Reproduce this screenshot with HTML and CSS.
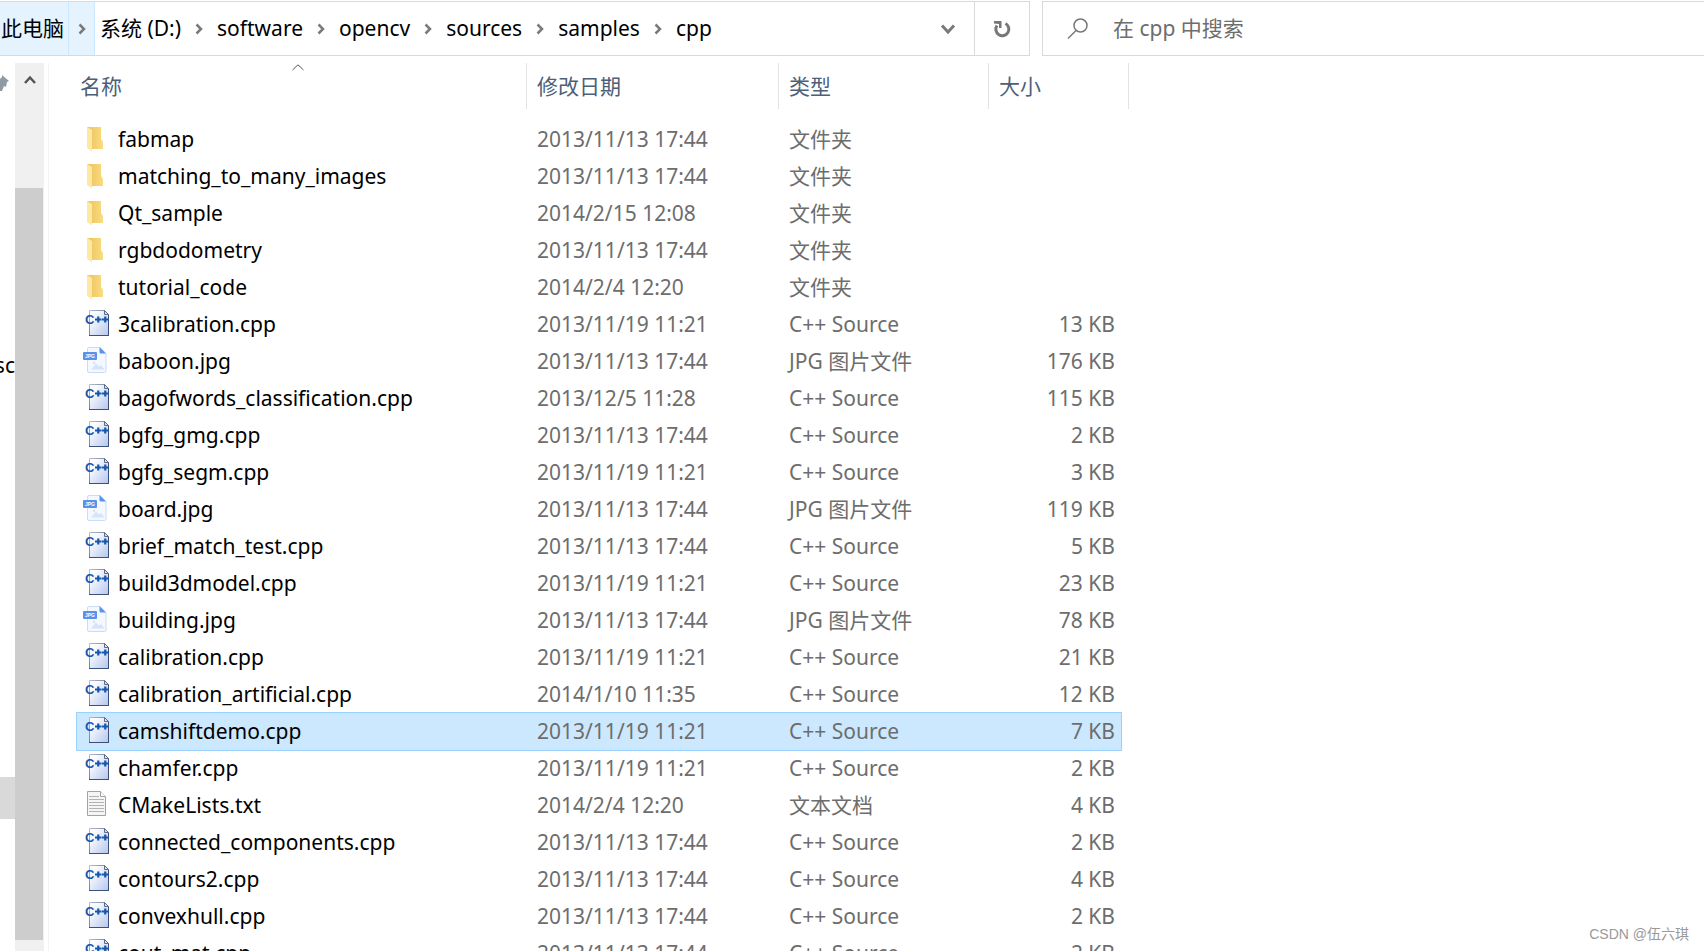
FILE: index.html
```html
<!DOCTYPE html>
<html lang="zh-CN">
<head>
<meta charset="utf-8">
<title>cpp</title>
<link rel="stylesheet" href="styles.css">
</head>
<body>
<svg class="defs" aria-hidden="true">
  <defs>
    <linearGradient id="page-blue" x1="0" y1="0" x2="1" y2="1">
      <stop offset="0.2" stop-color="#fdfdff"/><stop offset="1" stop-color="#b4c6ee"/>
    </linearGradient>
    <linearGradient id="page-edge" x1="0" y1="0" x2="1" y2="1">
      <stop offset="0" stop-color="#b3bdcd"/><stop offset="1" stop-color="#33456b"/>
    </linearGradient>
    <linearGradient id="folder-back" x1="0" y1="0" x2="1" y2="0">
      <stop offset="0.2" stop-color="#eec763"/><stop offset="1" stop-color="#fbdc80"/>
    </linearGradient>
    <symbol id="folder" viewBox="0 0 28 31">
      <path d="M4 3h14v12l2 3v7H5z" fill="url(#folder-back)"/>
      <path d="M4 3l5 3v21.500l-5-3.500z" fill="#ffe8a2"/>
    </symbol>
    <symbol id="cpp" viewBox="0 0 28 31">
      <path d="M6.500 1.500h15l4 4v21h-19z" fill="url(#page-blue)" stroke="url(#page-edge)"/>
      <path d="M21.500 1.500v4h4z" fill="#dce2ec" stroke="#5d6b85"/>
      <path d="M6 26.500h20M25.500 6v21" fill="none" stroke="#3d5078" stroke-width="1"/>
      <text x="2" y="15" class="cpp-mark">C</text>
      <path d="M12 10.500h6.500M15.250 7.500v6M19 10.500h6.500M22.250 7.500v6" stroke="#1457b0" stroke-width="2.200"/>
    </symbol>
    <symbol id="jpg" viewBox="0 0 28 31">
      <path d="M4.500 3q0-1.500 1.500-1.500h11l6 6V25q0 1.500-1.500 1.500H6q-1.500 0-1.500-1.500z" fill="#f4f8ff" stroke="#c9dcf8"/>
      <path d="M16.500 1l6.500 6.500h-5q-1.500 0-1.500-1.500z" fill="#5a92ea"/>
      <path d="M8 23.500l5-6 3 3 2-1.500 3.500 4.500z" fill="#d5e4fb"/><circle cx="11" cy="17" r="1.300" fill="#d5e4fb"/>
      <rect y="6" width="14" height="8" rx="1" fill="#5a92ea"/>
      <text x="7" y="12" class="jpg-mark">JPG</text>
    </symbol>
    <symbol id="txt" viewBox="0 0 28 31">
      <path d="M4.500 1.500h13l5 5v19h-18z" fill="#f5f5f5" stroke="#a2a2a2"/>
      <path d="M17.500 1.500v5h5" fill="#fff" stroke="#a2a2a2"/>
      <path d="M6 6.500h10M6 9.500h15M6 12.500h15M6 15.500h15M6 18.500h15M6 21.500h15" stroke="#b3b3b3"/>
    </symbol>
    <symbol id="chevron" viewBox="0 0 10 12"><path d="M2.500 1.500L7 6l-4.500 4.500" fill="none" stroke="#7a7a7a" stroke-width="2.500"/></symbol>
  </defs>
</svg>

<header class="topbar">
  <nav class="address" aria-label="地址">
    <div class="hot"><a class="crumb" href="#">此电脑</a><span class="sep"><svg><use href="#chevron"/></svg></span></div>
    <a class="crumb" href="#">系统 (D:)</a><span class="sep"><svg><use href="#chevron"/></svg></span>
    <a class="crumb" href="#">software</a><span class="sep"><svg><use href="#chevron"/></svg></span>
    <a class="crumb" href="#">opencv</a><span class="sep"><svg><use href="#chevron"/></svg></span>
    <a class="crumb" href="#">sources</a><span class="sep"><svg><use href="#chevron"/></svg></span>
    <a class="crumb" href="#">samples</a><span class="sep"><svg><use href="#chevron"/></svg></span>
    <a class="crumb" href="#">cpp</a>
    <button class="history" aria-label="历史记录"><svg width="16" height="12" viewBox="0 0 16 12"><path d="M2 2.500L8 9l6-6.500" fill="none" stroke="#7a7a7a" stroke-width="3"/></svg></button>
    <button class="refresh" aria-label="刷新"><svg width="18" height="18" viewBox="0 0 18 18"><path d="M12.500 3.500A6.500 6.500 0 1 1 4 5.500" fill="none" stroke="#777" stroke-width="3"/><path d="M1 1h7.500v7H6V4L1 3.500z" fill="#777"/></svg></button>
  </nav>
  <label class="search">
    <svg width="24" height="24" viewBox="0 0 24 24"><circle cx="14.500" cy="8.500" r="6.500" fill="none" stroke="#777" stroke-width="1.500"/><path d="M10 13.500L2 21.500" stroke="#777" stroke-width="1.500"/></svg>
    <input type="search" placeholder="在 cpp 中搜索" aria-label="在 cpp 中搜索">
  </label>
</header>

<main class="window">
  <aside class="tree">
    <svg class="pin" width="9" height="17" viewBox="0 0 9 17"><path d="M2 0l7 6-2 1-1 5-2-1-2 5H0V4l2-2z" fill="#8f9ba4"/></svg>
    <span class="tree-label">sc</span>
    <span class="tree-current"></span>
  </aside>
  <div class="scrollbar">
    <button class="scroll-up" aria-label="向上滚动"><svg width="14" height="10" viewBox="0 0 14 10"><path d="M2 8l5-5.500L12 8" fill="none" stroke="#555" stroke-width="2.500"/></svg></button>
    <div class="thumb"></div>
  </div>
  <section class="files">
    <table>
      <thead>
        <tr>
          <th><button>名称</button><svg class="sort" width="12" height="7" viewBox="0 0 12 7"><path d="M.5 6L6 .8 11.500 6" fill="none" stroke="#555"/></svg></th>
          <th><button>修改日期</button></th><th><button>类型</button></th><th><button>大小</button></th>
        </tr>
      </thead>
      <tbody>
        <tr><td><svg><use href="#folder"/></svg>fabmap</td><td>2013/11/13 17:44</td><td>文件夹</td><td></td></tr>
        <tr><td><svg><use href="#folder"/></svg>matching_to_many_images</td><td>2013/11/13 17:44</td><td>文件夹</td><td></td></tr>
        <tr><td><svg><use href="#folder"/></svg>Qt_sample</td><td>2014/2/15 12:08</td><td>文件夹</td><td></td></tr>
        <tr><td><svg><use href="#folder"/></svg>rgbdodometry</td><td>2013/11/13 17:44</td><td>文件夹</td><td></td></tr>
        <tr><td><svg><use href="#folder"/></svg>tutorial_code</td><td>2014/2/4 12:20</td><td>文件夹</td><td></td></tr>
        <tr><td><svg><use href="#cpp"/></svg>3calibration.cpp</td><td>2013/11/19 11:21</td><td>C++ Source</td><td>13 KB</td></tr>
        <tr><td><svg><use href="#jpg"/></svg>baboon.jpg</td><td>2013/11/13 17:44</td><td>JPG 图片文件</td><td>176 KB</td></tr>
        <tr><td><svg><use href="#cpp"/></svg>bagofwords_classification.cpp</td><td>2013/12/5 11:28</td><td>C++ Source</td><td>115 KB</td></tr>
        <tr><td><svg><use href="#cpp"/></svg>bgfg_gmg.cpp</td><td>2013/11/13 17:44</td><td>C++ Source</td><td>2 KB</td></tr>
        <tr><td><svg><use href="#cpp"/></svg>bgfg_segm.cpp</td><td>2013/11/19 11:21</td><td>C++ Source</td><td>3 KB</td></tr>
        <tr><td><svg><use href="#jpg"/></svg>board.jpg</td><td>2013/11/13 17:44</td><td>JPG 图片文件</td><td>119 KB</td></tr>
        <tr><td><svg><use href="#cpp"/></svg>brief_match_test.cpp</td><td>2013/11/13 17:44</td><td>C++ Source</td><td>5 KB</td></tr>
        <tr><td><svg><use href="#cpp"/></svg>build3dmodel.cpp</td><td>2013/11/19 11:21</td><td>C++ Source</td><td>23 KB</td></tr>
        <tr><td><svg><use href="#jpg"/></svg>building.jpg</td><td>2013/11/13 17:44</td><td>JPG 图片文件</td><td>78 KB</td></tr>
        <tr><td><svg><use href="#cpp"/></svg>calibration.cpp</td><td>2013/11/19 11:21</td><td>C++ Source</td><td>21 KB</td></tr>
        <tr><td><svg><use href="#cpp"/></svg>calibration_artificial.cpp</td><td>2014/1/10 11:35</td><td>C++ Source</td><td>12 KB</td></tr>
        <tr class="selected"><td><svg><use href="#cpp"/></svg>camshiftdemo.cpp</td><td>2013/11/19 11:21</td><td>C++ Source</td><td>7 KB</td></tr>
        <tr><td><svg><use href="#cpp"/></svg>chamfer.cpp</td><td>2013/11/19 11:21</td><td>C++ Source</td><td>2 KB</td></tr>
        <tr><td><svg><use href="#txt"/></svg>CMakeLists.txt</td><td>2014/2/4 12:20</td><td>文本文档</td><td>4 KB</td></tr>
        <tr><td><svg><use href="#cpp"/></svg>connected_components.cpp</td><td>2013/11/13 17:44</td><td>C++ Source</td><td>2 KB</td></tr>
        <tr><td><svg><use href="#cpp"/></svg>contours2.cpp</td><td>2013/11/13 17:44</td><td>C++ Source</td><td>4 KB</td></tr>
        <tr><td><svg><use href="#cpp"/></svg>convexhull.cpp</td><td>2013/11/13 17:44</td><td>C++ Source</td><td>2 KB</td></tr>
        <tr><td><svg><use href="#cpp"/></svg>cout_mat.cpp</td><td>2013/11/13 17:44</td><td>C++ Source</td><td>2 KB</td></tr>
      </tbody>
    </table>
  </section>
</main>
<div class="watermark">CSDN @伍六琪</div>
</body>
</html>
```

FILE: styles.css
```css
* { box-sizing: border-box; }

body {
  margin: 0;
  height: 100vh;
  overflow: hidden;
  display: flex;
  flex-direction: column;
  background: #fff;
  color: #000;
  font: 21px/36px "Noto Sans", "Noto Sans CJK SC", sans-serif;
}

button, input {
  font: inherit;
  color: inherit;
  border: 0;
  padding: 0;
  margin: 0;
  background: none;
}

svg { display: block; flex: none; }
.defs { position: absolute; width: 0; height: 0; }

/* address bar and search box */
.topbar {
  display: flex;
  gap: 12px;
  height: 55px;
  margin-top: 1px;
  flex: none;
}

.address {
  display: flex;
  align-items: stretch;
  flex: 0 1 1030px;
  border: 1px solid #d9d9d9;
  border-left: 0;
}

.hot { display: flex; background: #e5f3ff; border-right: 1px solid #cce8ff; }
.hot .sep { border-left: 1px solid #cce8ff; }

.crumb {
  padding: 0 5px 2px;
  display: flex;
  align-items: center;
  color: inherit;
  text-decoration: none;
  white-space: nowrap;
}
.hot .crumb { padding-left: 1px; padding-right: 4px; }

.sep { width: 26px; display: flex; align-items: center; justify-content: center; }
.sep svg { width: 10px; height: 12px; }

.history, .refresh { display: flex; align-items: center; justify-content: center; width: 52px; }
.history { margin-left: auto; }
.refresh { width: 55px; border-left: 1px solid #d9d9d9; }

.search {
  flex: 1;
  display: flex;
  align-items: center;
  gap: 23px;
  padding-left: 23px;
  border: 1px solid #d9d9d9;
  border-right: 0;
}
.search input { flex: 1; min-width: 0; outline: 0; padding-bottom: 2px; }
.search input::placeholder { color: #6d6d6d; opacity: 1; }

/* tree strip with its scroll bar */
.window { flex: 1; min-height: 0; display: flex; padding-top: 7px; }

.tree { width: 15px; display: flex; flex-direction: column; overflow: hidden; }
.pin { margin-top: 12px; }
.tree-label { margin-top: 255px; align-self: flex-end; }
.tree-current { margin-top: 394px; height: 42px; background: #d9d9d9; }

.scrollbar { width: 29px; display: flex; flex-direction: column; background: #f0f0f0; padding-bottom: 11px; }
.scroll-up { height: 34px; display: flex; align-items: center; justify-content: center; }
.thumb { flex: 1; margin-top: 91px; margin-right: 1px; background: #cdcdcd; }

.files { flex: 1; min-width: 0; overflow: hidden; margin-left: 4px; padding-left: 27px; border-left: 1px solid #f3f3f3; }

/* file list */
table, thead, tbody { display: block; }
tr { display: grid; grid-template-columns: 451px 252px 210px 133px; width: max-content; }

thead { margin-bottom: 12px; }
thead tr { grid-template-columns: 451px 252px 210px 140px; height: 46px; }
th {
  position: relative;
  display: flex;
  align-items: center;
  padding: 0 0 1px 10px;
  border-right: 1px solid #e3e3e3;
  color: #4c607a;
  font-weight: 400;
}
th:first-child { padding-left: 4px; }
.sort { position: absolute; top: 1px; left: 50%; margin-left: -9px; }

td { height: 37px; padding: 0 0 0 10px; color: #6d6d6d; white-space: nowrap; }
td:first-child { display: flex; align-items: flex-start; gap: 7px; padding-left: 7px; color: #000; }
td:last-child { padding: 0 7px 0 0; text-align: right; }
td svg { width: 28px; height: 31px; margin-top: 3px; }

.selected {
  background: #cce8ff;
  box-shadow: 0 -1px #99d1ff, 0 1px #99d1ff, inset 1px 0 #99d1ff, inset -1px 0 #99d1ff;
}

.cpp-mark { font: bold 13px "Liberation Sans", sans-serif; fill: #1457b0; }
.jpg-mark { font: bold 5px "Liberation Sans", sans-serif; fill: #fff; text-anchor: middle; }

.watermark {
  position: absolute;
  right: 15px;
  bottom: 6px;
  font: 14px/22px "Liberation Sans", "Noto Sans CJK SC", sans-serif;
  color: #999;
}
```
